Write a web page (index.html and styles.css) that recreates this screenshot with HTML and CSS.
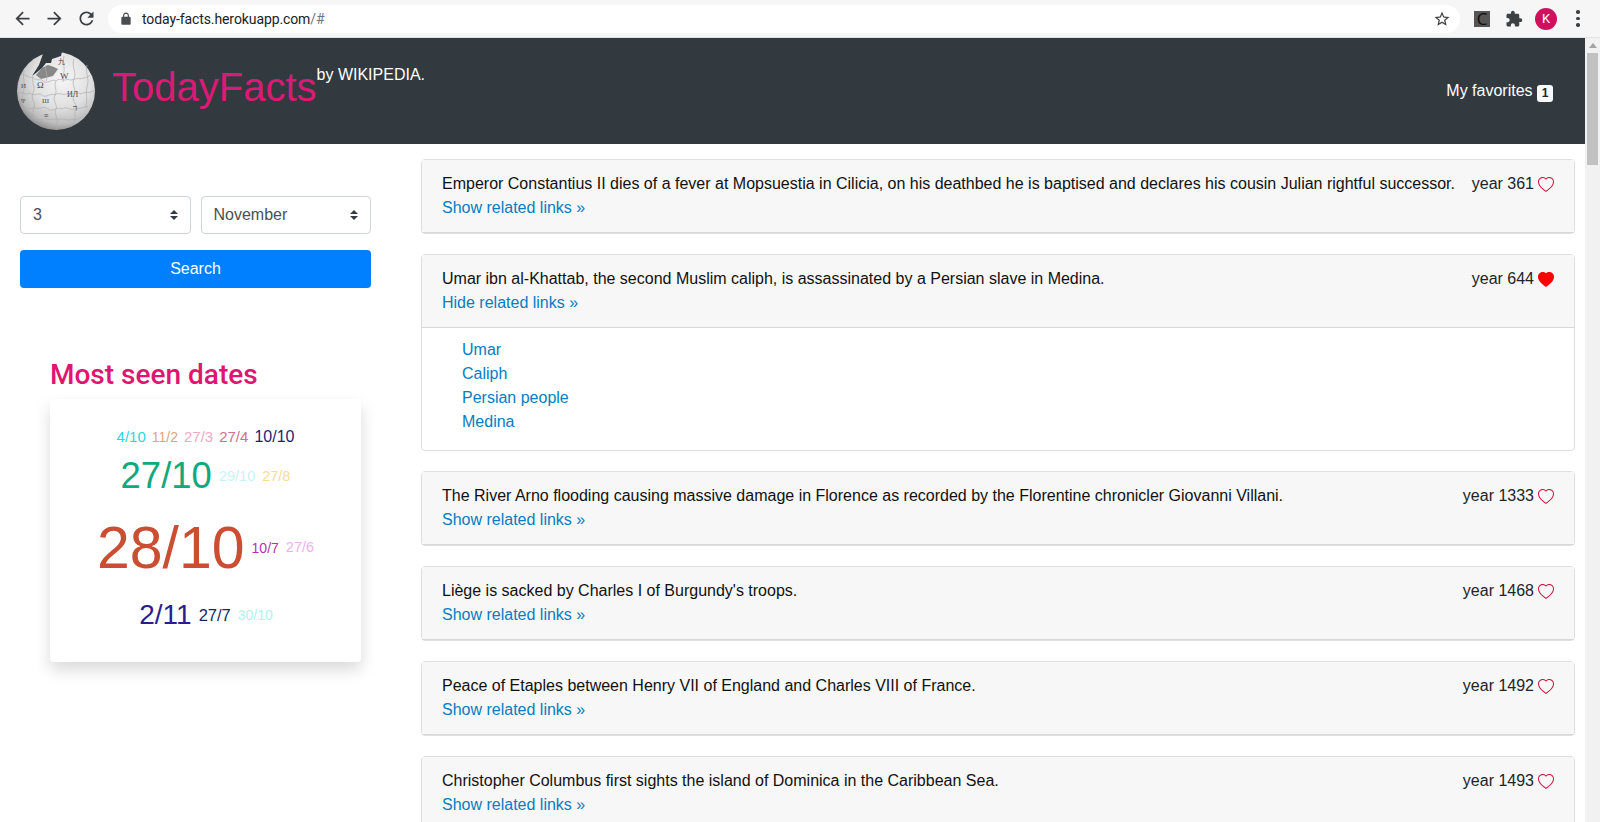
FILE: index.html
```html
<!DOCTYPE html>
<html lang="en">

<head>
  <meta charset="UTF-8">
  <meta name="viewport" content="width=device-width, initial-scale=1.0">
  <title>TodayFacts</title>
  <link rel="stylesheet" href="styles.css">
</head>

<body>
  <!-- browser toolbar -->
  <div class="toolbar">
    <svg class="tool-icon" viewBox="0 0 24 24"><path d="M20 11H7.83l5.59-5.59L12 4l-8 8 8 8 1.41-1.41L7.83 13H20v-2z"/></svg>
    <svg class="tool-icon" viewBox="0 0 24 24"><path d="M12 4l-1.41 1.41L16.17 11H4v2h12.17l-5.58 5.59L12 20l8-8z"/></svg>
    <svg class="tool-icon" viewBox="0 0 24 24"><path d="M17.65 6.35C16.2 4.9 14.21 4 12 4c-4.42 0-7.99 3.58-7.99 8s3.57 8 7.99 8c3.73 0 6.84-2.55 7.73-6h-2.08c-.82 2.33-3.04 4-5.65 4-3.31 0-6-2.69-6-6s2.69-6 6-6c1.66 0 3.14.69 4.22 1.78L13 11h7V4l-2.35 2.35z"/></svg>
    <div class="omnibox">
      <svg class="lock" viewBox="0 0 24 24"><path d="M18 8h-1V6c0-2.76-2.24-5-5-5S7 3.24 7 6v2H6c-1.1 0-2 .9-2 2v10c0 1.1.9 2 2 2h12c1.1 0 2-.9 2-2V10c0-1.1-.9-2-2-2zM9 6c0-1.66 1.34-3 3-3s3 1.34 3 3v2H9V6z"/></svg>
      <span class="url">today-facts.herokuapp.com<span class="url-rest">/#</span></span>
      <svg class="star" viewBox="0 0 24 24"><path d="M22 9.24l-7.19-.62L12 2 9.19 8.63 2 9.24l5.46 4.73L5.82 21 12 17.27 18.18 21l-1.63-7.03L22 9.24zM12 15.4l-3.76 2.27 1-4.28-3.32-2.88 4.38-.38L12 6.1l1.71 4.04 4.38.38-3.32 2.88 1 4.28L12 15.4z"/></svg>
    </div>
    <div class="ext-c">C</div>
    <svg class="puzzle" viewBox="0 0 24 24"><path d="M20.5 11H19V7c0-1.1-.9-2-2-2h-4V3.5C13 2.12 11.88 1 10.5 1S8 2.12 8 3.5V5H4c-1.1 0-1.99.9-1.99 2v3.8H3.5c1.49 0 2.7 1.21 2.7 2.7s-1.21 2.7-2.7 2.7H2V20c0 1.1.9 2 2 2h3.8v-1.5c0-1.49 1.21-2.7 2.7-2.7 1.49 0 2.7 1.21 2.7 2.7V22H17c1.1 0 2-.9 2-2v-4h1.5c1.38 0 2.5-1.12 2.5-2.5S21.88 11 20.5 11z"/></svg>
    <div class="avatar">K</div>
    <div class="dots"><i></i><i></i><i></i></div>
  </div>

  <div class="window">
    <div class="page">
      <!-- header -->
      <header class="site-header">
        <svg class="globe" viewBox="1 1 78 78">
          <defs>
            <radialGradient id="ball" cx="58%" cy="34%" r="68%">
              <stop offset="0" stop-color="#f6f6f6"/>
              <stop offset="0.55" stop-color="#e0e0e0"/>
              <stop offset="0.85" stop-color="#bdbdbd"/>
              <stop offset="1" stop-color="#8f8f8f"/>
            </radialGradient>
          </defs>
          <circle cx="40" cy="40" r="39" fill="url(#ball)"/>
          <path d="M20 24 L26 17 L32 14 L38 16 L42 18 L37 25 L25 28 Z" fill="#888"/>
          <path d="M28 0 L23 14 L16 25 L20 22 L26 17 L30 12 L35 12 L36 8 L45 5 L46 0 Z" fill="#32393f"/>
          <g class="seams">
            <path d="M5 24 C10 22 12 28 17 26 C20 31 24 27 27 30 C31 34 36 27 40 30 C44 26 47 31 52 28 C55 31 60 26 64 28 C68 26 71 28 74 24"/>
            <path d="M1 42 C7 40 9 45 14 42 C18 46 22 41 26 44 C30 48 35 41 39 44 C43 40 47 46 52 42 C56 45 60 40 65 43 C70 40 74 43 79 39"/>
            <path d="M5 57 C10 55 14 60 18 56 C23 60 27 54 32 58 C36 62 41 55 46 58 C50 54 55 61 60 57 C64 59 68 55 72 56"/>
            <path d="M15 68 C20 66 24 71 29 67 C33 71 38 66 43 69 C47 66 52 71 57 68 C60 70 62 68 65 66"/>
            <path d="M17 26 C15 31 20 35 17 42 C14 47 20 52 18 56 C15 61 20 65 19 70"/>
            <path d="M40 30 C37 35 42 39 39 44 C36 50 42 54 40 58 C37 63 43 67 41 72 C40 75 42 77 41 79"/>
            <path d="M58 8 C55 16 61 20 58 28 C55 34 61 38 58 43 C55 49 61 53 60 57 C57 62 61 66 58 70"/>
            <path d="M30 14 C28 20 33 24 30 30 M48 5 C46 12 50 18 47 24 C46 27 48 29 47 31"/>
            <path d="M71 14 C69 22 74 28 71 36 C69 42 72 48 70 56"/>
            <path d="M8 20 C6 28 10 34 7 42 C5 48 8 52 7 58"/>
          </g>
          <g class="glyphs">
            <text x="21" y="37" font-size="9">Ω</text>
            <text x="44" y="28" font-size="9">W</text>
            <text x="5" y="37" font-size="7">И</text>
            <text x="51" y="46" font-size="8">ИЛ</text>
            <text x="26" y="52" font-size="7">Ш</text>
            <text x="5" y="52" font-size="6">Ψ</text>
            <text x="57" y="60" font-size="9">ר</text>
            <text x="28" y="67" font-size="8">≡</text>
            <text x="42" y="13" font-size="7">九</text>
          </g>
        </svg>
        <div class="brand">
          <span class="brand-name">TodayFacts</span><span class="brand-by">by WIKIPEDIA.</span>
        </div>
        <a class="favorites" href="#">My favorites <span class="badge">1</span></a>
      </header>

      <div class="content">
        <aside class="sidebar">
          <form class="search-form">
            <div class="select-row">
              <select class="date-select">
                <option>3</option>
              </select>
              <select class="date-select">
                <option>November</option>
              </select>
            </div>
            <button class="search-btn" type="button">Search</button>
          </form>

          <h2 class="cloud-title">Most seen dates</h2>
          <div class="cloud">
            <div class="cloud-row row-a">
              <a style="font-size:15px;color:#2dd4e2">4/10</a>
              <a style="font-size:14px;color:#e2a379">11/2</a>
              <a style="font-size:15px;color:#eeaac4">27/3</a>
              <a style="font-size:15px;color:#d26f8e">27/4</a>
              <a style="font-size:16px;color:#1c1f78">10/10</a>
            </div>
            <div class="cloud-row row-b">
              <a style="font-size:36.5px;color:#11a97b">27/10</a>
              <a style="font-size:14.5px;color:#c7f2f5">29/10</a>
              <a style="font-size:14.5px;color:#f5dd93">27/8</a>
            </div>
            <div class="cloud-row row-c">
              <a style="font-size:59px;color:#c94e32">28/10</a>
              <a style="font-size:14px;color:#b233b2">10/7</a>
              <a style="font-size:14.5px;color:#ecb2ec">27/6</a>
            </div>
            <div class="cloud-row row-d">
              <a style="font-size:28px;color:#2b1d8f">2/11</a>
              <a style="font-size:16.5px;color:#13295e">27/7</a>
              <a style="font-size:14px;color:#b2f1ee">30/10</a>
            </div>
          </div>
        </aside>

        <main class="facts">
          <div class="fact">
            <div class="fact-head">
              <div class="fact-row">
                <span>Emperor Constantius II dies of a fever at Mopsuestia in Cilicia, on his deathbed he is baptised and declares his cousin Julian rightful successor.</span>
                <span class="year">year 361<svg class="heart" viewBox="0 0 16 16"><path d="m8 2.748-.717-.737C5.6.281 2.514.878 1.4 3.053c-.523 1.023-.641 2.5.314 4.385.92 1.815 2.834 3.989 6.286 6.357 3.452-2.368 5.365-4.542 6.286-6.357.955-1.886.838-3.362.314-4.385C13.486.878 10.4.28 8.717 2.01L8 2.748zM8 15C-7.333 4.868 3.279-3.04 7.824 1.143c.06.055.119.112.176.171a3.12 3.12 0 0 1 .176-.17C12.72-3.042 23.333 4.867 8 15z"/></svg></span>
              </div>
              <a class="fact-link" href="#">Show related links »</a>
            </div>
          </div>

          <div class="fact">
            <div class="fact-head">
              <div class="fact-row">
                <span>Umar ibn al-Khattab, the second Muslim caliph, is assassinated by a Persian slave in Medina.</span>
                <span class="year">year 644<svg class="heart heart-on" viewBox="0 0 16 16"><path d="M8 1.314C12.438-3.248 23.534 4.735 8 15-7.534 4.736 3.562-3.248 8 1.314z"/></svg></span>
              </div>
              <a class="fact-link" href="#">Hide related links »</a>
            </div>
            <ul class="fact-links">
              <li><a href="#">Umar</a></li>
              <li><a href="#">Caliph</a></li>
              <li><a href="#">Persian people</a></li>
              <li><a href="#">Medina</a></li>
            </ul>
          </div>

          <div class="fact">
            <div class="fact-head">
              <div class="fact-row">
                <span>The River Arno flooding causing massive damage in Florence as recorded by the Florentine chronicler Giovanni Villani.</span>
                <span class="year">year 1333<svg class="heart" viewBox="0 0 16 16"><path d="m8 2.748-.717-.737C5.6.281 2.514.878 1.4 3.053c-.523 1.023-.641 2.5.314 4.385.92 1.815 2.834 3.989 6.286 6.357 3.452-2.368 5.365-4.542 6.286-6.357.955-1.886.838-3.362.314-4.385C13.486.878 10.4.28 8.717 2.01L8 2.748zM8 15C-7.333 4.868 3.279-3.04 7.824 1.143c.06.055.119.112.176.171a3.12 3.12 0 0 1 .176-.17C12.72-3.042 23.333 4.867 8 15z"/></svg></span>
              </div>
              <a class="fact-link" href="#">Show related links »</a>
            </div>
          </div>

          <div class="fact">
            <div class="fact-head">
              <div class="fact-row">
                <span>Liège is sacked by Charles I of Burgundy's troops.</span>
                <span class="year">year 1468<svg class="heart" viewBox="0 0 16 16"><path d="m8 2.748-.717-.737C5.6.281 2.514.878 1.4 3.053c-.523 1.023-.641 2.5.314 4.385.92 1.815 2.834 3.989 6.286 6.357 3.452-2.368 5.365-4.542 6.286-6.357.955-1.886.838-3.362.314-4.385C13.486.878 10.4.28 8.717 2.01L8 2.748zM8 15C-7.333 4.868 3.279-3.04 7.824 1.143c.06.055.119.112.176.171a3.12 3.12 0 0 1 .176-.17C12.72-3.042 23.333 4.867 8 15z"/></svg></span>
              </div>
              <a class="fact-link" href="#">Show related links »</a>
            </div>
          </div>

          <div class="fact">
            <div class="fact-head">
              <div class="fact-row">
                <span>Peace of Etaples between Henry VII of England and Charles VIII of France.</span>
                <span class="year">year 1492<svg class="heart" viewBox="0 0 16 16"><path d="m8 2.748-.717-.737C5.6.281 2.514.878 1.4 3.053c-.523 1.023-.641 2.5.314 4.385.92 1.815 2.834 3.989 6.286 6.357 3.452-2.368 5.365-4.542 6.286-6.357.955-1.886.838-3.362.314-4.385C13.486.878 10.4.28 8.717 2.01L8 2.748zM8 15C-7.333 4.868 3.279-3.04 7.824 1.143c.06.055.119.112.176.171a3.12 3.12 0 0 1 .176-.17C12.72-3.042 23.333 4.867 8 15z"/></svg></span>
              </div>
              <a class="fact-link" href="#">Show related links »</a>
            </div>
          </div>

          <div class="fact">
            <div class="fact-head">
              <div class="fact-row">
                <span>Christopher Columbus first sights the island of Dominica in the Caribbean Sea.</span>
                <span class="year">year 1493<svg class="heart" viewBox="0 0 16 16"><path d="m8 2.748-.717-.737C5.6.281 2.514.878 1.4 3.053c-.523 1.023-.641 2.5.314 4.385.92 1.815 2.834 3.989 6.286 6.357 3.452-2.368 5.365-4.542 6.286-6.357.955-1.886.838-3.362.314-4.385C13.486.878 10.4.28 8.717 2.01L8 2.748zM8 15C-7.333 4.868 3.279-3.04 7.824 1.143c.06.055.119.112.176.171a3.12 3.12 0 0 1 .176-.17C12.72-3.042 23.333 4.867 8 15z"/></svg></span>
              </div>
              <a class="fact-link" href="#">Show related links »</a>
            </div>
          </div>
        </main>
      </div>
    </div>

    <!-- page scrollbar -->
    <div class="scrollbar">
      <div class="scroll-up"></div>
      <div class="scroll-thumb"></div>
    </div>
  </div>
</body>

</html>
```

FILE: styles.css
```css
* {
  box-sizing: border-box;
}

html,
body {
  margin: 0;
  height: 822px;
  overflow: hidden;
}

body {
  font-family: "Liberation Sans", Arial, sans-serif;
  font-size: 16px;
  line-height: 24px;
  color: #212529;
  background: #fff;
}

a {
  text-decoration: none;
}

/* browser toolbar */
.toolbar {
  height: 38px;
  display: flex;
  align-items: center;
  background: #f6f6f6;
  border-bottom: 1px solid #e2e2e2;
  padding-left: 12px;
}

.tool-icon {
  width: 21px;
  height: 21px;
  margin-right: 11px;
  fill: #3c4043;
}

.omnibox {
  width: 1352px;
  height: 28px;
  display: flex;
  align-items: center;
  background: #fff;
  border-radius: 14px;
  padding: 0 9px 0 11px;
}

.lock {
  width: 14px;
  height: 14px;
  margin-right: 9px;
  fill: #4a4d50;
}

.url {
  font-family: Roboto, sans-serif;
  font-size: 14px;
  letter-spacing: -0.1px;
  color: #202124;
  flex: 1;
}

.url-rest {
  color: #70757a;
}

.star {
  width: 18px;
  height: 18px;
  fill: #3c4043;
}

.ext-c {
  width: 16px;
  height: 16px;
  margin-left: 14px;
  background: #555;
  color: #0c0c0c;
  font-family: "Open Sans", sans-serif;
  font-size: 17px;
  line-height: 16px;
  text-align: center;
}

.puzzle {
  width: 18px;
  height: 18px;
  margin-left: 15px;
  fill: #3c4043;
}

.avatar {
  width: 22px;
  height: 22px;
  margin-left: 12px;
  border-radius: 50%;
  background: #d0105c;
  color: #fff;
  font-family: Roboto, sans-serif;
  font-size: 13px;
  line-height: 22px;
  text-align: center;
}

.dots {
  display: flex;
  flex-direction: column;
  gap: 3px;
  margin-left: 19px;
}

.dots i {
  width: 3.5px;
  height: 3.5px;
  border-radius: 50%;
  background: #3c4043;
}

/* page + scrollbar */
.window {
  display: flex;
  height: 784px;
}

.page {
  width: 1585px;
  overflow: hidden;
}

.scrollbar {
  width: 15px;
  background: #f1f1f1;
  padding: 0 2px;
}

.scroll-up {
  width: 0;
  height: 0;
  margin: 5px auto 5px;
  border-left: 4px solid transparent;
  border-right: 4px solid transparent;
  border-bottom: 5px solid #a3a3a3;
}

.scroll-thumb {
  height: 112px;
  background: #c1c1c1;
}

/* header */
.site-header {
  height: 106px;
  display: flex;
  align-items: flex-start;
  background: #32393f;
  padding: 14px 32px 0 17px;
}

.globe {
  width: 78px;
  height: 78px;
  flex: none;
}

.seams path {
  fill: none;
  stroke: #adadad;
  stroke-width: 0.7;
}

.glyphs text {
  fill: #4a4a4a;
  font-family: "Liberation Serif", "Noto Sans CJK SC", serif;
}

.brand {
  margin-left: 17px;
  color: #fff;
  flex: 1;
}

.brand-name {
  display: inline-block;
  font-size: 40px;
  line-height: 48px;
  margin-top: 11px;
  color: #dc1a75;
}

.brand-by {
  vertical-align: 21px;
}

.favorites {
  color: #fff;
  margin-top: 27px;
}

.badge {
  display: inline-block;
  width: 16px;
  height: 17px;
  background: #f8f9fa;
  color: #212529;
  border-radius: 3px;
  font-size: 12px;
  font-weight: 700;
  line-height: 17px;
  text-align: center;
  vertical-align: -1px;
}

/* left column */
.content {
  display: flex;
  align-items: flex-start;
}

.sidebar {
  width: 421px;
  flex: none;
  padding: 52px 0 0 20px;
}

.search-form {
  width: 351px;
}

.select-row {
  display: flex;
  gap: 10px;
}

.date-select {
  flex: 1;
  width: 0;
  height: 38px;
  padding: 0 12px 2px;
  appearance: none;
  font-family: inherit;
  font-size: 16px;
  color: #495057;
  background: #fff url("data:image/svg+xml,%3Csvg xmlns='http://www.w3.org/2000/svg' width='8' height='10'%3E%3Cpath fill='%23343a40' d='M4 0 0 4h8zM4 10 0 6h8z'/%3E%3C/svg%3E") no-repeat right 12px center;
  border: 1px solid #ced4da;
  border-radius: 4px;
}

.search-btn {
  display: block;
  width: 100%;
  height: 38px;
  margin-top: 16px;
  background: #007fff;
  border: 0;
  border-radius: 4px;
  color: #fff;
  font-family: inherit;
  font-size: 16px;
}

.cloud-title {
  margin: 70px 0 7px 30px;
  font-family: Roboto, sans-serif;
  font-size: 28px;
  font-weight: 500;
  line-height: 34px;
  color: #df1570;
}

.cloud {
  width: 311px;
  height: 263px;
  margin-left: 30px;
  padding-top: 26px;
  background: #fff;
  border-radius: 4px;
  box-shadow: 0 8px 16px rgba(0, 0, 0, 0.15);
}

.cloud-row {
  display: flex;
  align-items: center;
  justify-content: center;
  gap: 7px;
  line-height: 1.5;
}

.row-a {
  gap: 6px;
}

.row-d {
  margin: 2px 0 0 1px;
}

/* fact cards */
.facts {
  flex: 1;
  padding: 15px 10px 0 0;
}

.fact {
  margin-bottom: 20px;
  border: 1px solid rgba(0, 0, 0, 0.125);
  border-radius: 4px;
  color: #111;
}

.fact-head {
  padding: 12px 20px;
  background: #f7f7f7;
  border-bottom: 1px solid rgba(0, 0, 0, 0.125);
}

.fact-row {
  display: flex;
  justify-content: space-between;
  gap: 16px;
}

.year {
  display: flex;
  align-items: center;
  gap: 4px;
  flex: none;
  color: #212529;
}

.heart {
  width: 16px;
  height: 16px;
  margin-top: 2px;
  fill: #c9143c;
}

.heart-on {
  fill: #ff0000;
}

.fact-link,
.fact-links a {
  color: #067dc2;
}

.fact-links {
  list-style: none;
  margin: 0;
  padding: 10px 20px 16px 40px;
}
```
